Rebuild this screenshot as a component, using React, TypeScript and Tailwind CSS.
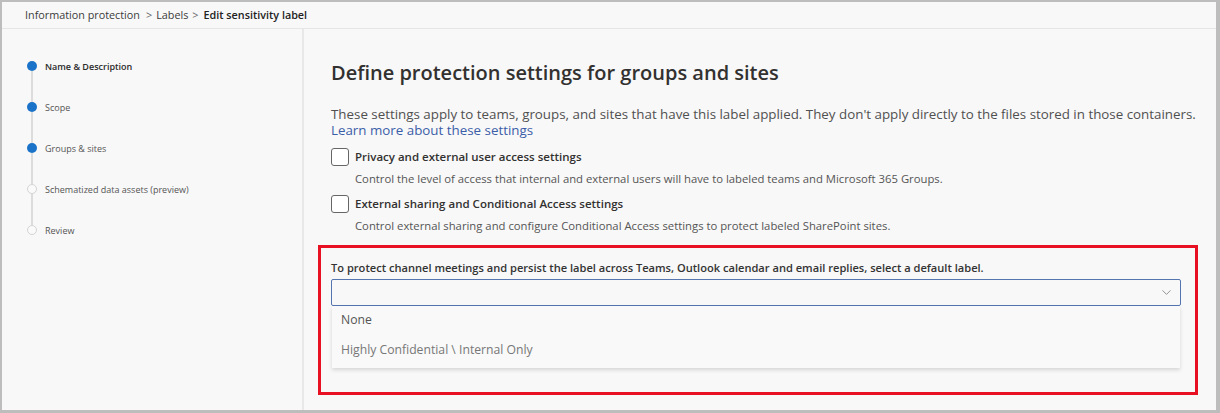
import { ChevronDown } from "lucide-react"

const steps = [
  { label: "Name & Description", done: true, bold: true },
  { label: "Scope", done: true },
  { label: "Groups & sites", done: true },
  { label: "Schematized data assets (preview)", done: false },
  { label: "Review", done: false },
]

function Stepper() {
  return (
    <div className="flex flex-col pl-[25px] pt-[32px]">
      {steps.map((s, i) => (
        <div key={s.label} className="flex flex-col">
          <div className="flex items-center h-[10px]">
            {s.done ? (
              <span className="w-[10px] h-[10px] rounded-full bg-[#1a73c8]" />
            ) : (
              <span className="w-[10px] h-[10px] rounded-full border border-[#d4d4d4] bg-[#fafafa]" />
            )}
            <span
              className={
                "ml-[8px] text-[9px] leading-none whitespace-nowrap " +
                (s.bold ? "font-semibold text-[#2b2b2b]" : "text-[#555]")
              }
            >
              {s.label}
            </span>
          </div>
          {i < steps.length - 1 && (
            <div className="ml-[4px] w-[2px] h-[31px] bg-[#dcdcdc]" />
          )}
        </div>
      ))}
    </div>
  )
}

function Option({ title, desc, className }: { title: string; desc: string; className?: string }) {
  return (
    <div className={"flex flex-col " + (className ?? "")}>
      <div className="flex items-center gap-[6px] h-[18px]">
        <span className="w-[18px] h-[18px] rounded-[3px] border border-[#666] bg-white" />
        <span className="text-[11.5px] font-semibold text-[#323130] whitespace-nowrap">{title}</span>
      </div>
      <p className="ml-[24px] mt-[5px] text-[11.3px] leading-[16px] text-[#555] whitespace-nowrap">{desc}</p>
    </div>
  )
}

export default function App() {
  return (
    <div
      className="w-[1220px] h-[413px] bg-[#f8f8f8] border-l-2 border-t-2 border-r-4 border-b-[3px] border-[#bdbdbd] flex flex-col overflow-hidden"
      style={{ fontFamily: '"Open Sans", "Noto Sans", sans-serif' }}
    >
      <header className="h-[27px] shrink-0 border-b border-[#e6e6e6] flex items-center pl-[23px] text-[10.8px] text-[#3b3b3b] whitespace-nowrap">
        <span>Information protection</span>
        <span className="ml-[6px] text-[#666]">&gt;</span>
        <span className="ml-[4px]">Labels</span>
        <span className="ml-[4px] text-[#666]">&gt;</span>
        <span className="ml-[5px] font-semibold text-[#222]">Edit sensitivity label</span>
      </header>

      <div className="flex flex-1 min-h-0">
        <aside className="w-[302px] shrink-0 border-r-2 border-[#e8e8e8]">
          <Stepper />
        </aside>

        <main className="flex-1 pl-[27px] pr-[10px]">
          <h1 className="mt-[32px] text-[20px] font-semibold text-[#323130] leading-[24px] whitespace-nowrap">
            Define protection settings for groups and sites
          </h1>
          <p className="mt-[21px] text-[13.35px] leading-[16px] text-[#505050] whitespace-nowrap">
            These settings apply to teams, groups, and sites that have this label applied. They don't apply directly to the files stored in those containers.
          </p>
          <a className="block text-[13.35px] leading-[16px] text-[#3b5ea8]">
            Learn more about these settings
          </a>

          <Option
            className="mt-[10px]"
            title="Privacy and external user access settings"
            desc="Control the level of access that internal and external users will have to labeled teams and Microsoft 365 Groups."
          />
          <Option
            className="mt-[8px]"
            title="External sharing and Conditional Access settings"
            desc="Control external sharing and configure Conditional Access settings to protect labeled SharePoint sites."
          />

          <div className="mt-[11px] -ml-[13px] w-[880px] h-[150px] border-[3px] border-[#e81123] pl-[10px] pr-[14px] pt-[13px]">
            <p className="text-[11.1px] leading-[14px] font-semibold text-[#333] whitespace-nowrap">
              To protect channel meetings and persist the label across Teams, Outlook calendar and email replies, select a default label.
            </p>
            <div className="mt-[4px] h-[27px] border border-[#5575b0] rounded-[2px] bg-[#f8f8f8] flex items-center justify-end pr-[6px]">
              <ChevronDown size={15} strokeWidth={1.25} className="text-[#777]" />
            </div>
            <div className="mx-[1px] bg-[#f9f9f9] shadow-[0_2px_4px_rgba(0,0,0,0.14)] flex flex-col pb-[2px]">
              <div className="h-[29px] flex items-center pl-[9px] text-[12.2px] text-[#555]">None</div>
              <div className="h-[31px] flex items-center pl-[9px] text-[12.2px] text-[#777]">
                Highly Confidential \ Internal Only
              </div>
            </div>
          </div>
        </main>
      </div>
    </div>
  )
}
